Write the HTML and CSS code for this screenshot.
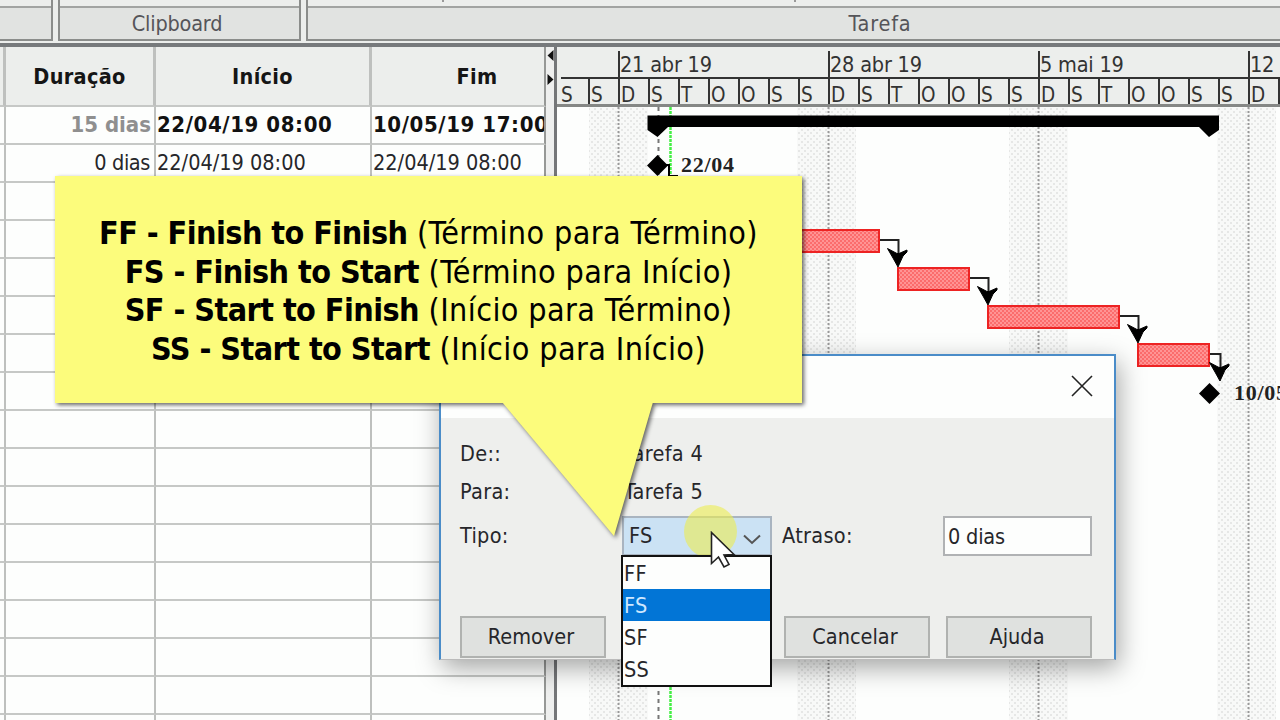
FILE: index.html
```html
<!DOCTYPE html>
<html lang="pt-BR">

<head>
    <meta charset="UTF-8">
    <meta name="viewport" content="width=device-width, initial-scale=1.0">
    <title>Gantt</title>
    <link rel="stylesheet" href="styles.css">
</head>

<body>
    <div class="ribbon">
        <div class="group group-first"><div class="group-title"></div></div>
        <div class="group group-clipboard"><div class="group-title">Clipboard</div></div>
        <div class="group group-task"><div class="group-title">Tarefa</div></div>
    </div>

    <main class="workspace">
        <table class="tasks">
            <colgroup>
                <col class="col-edge"><col class="col-duration"><col class="col-start"><col class="col-end">
            </colgroup>
            <thead>
                <tr>
                    <th></th>
                    <th>Duração</th>
                    <th>Início</th>
                    <th class="th-end">Fim</th>
                </tr>
            </thead>
            <tbody id="taskRows">
                <tr class="summary">
                    <td></td>
                    <td class="duration">15 dias</td>
                    <td>22/04/19 08:00</td>
                    <td>10/05/19 17:00</td>
                </tr>
                <tr>
                    <td></td>
                    <td class="duration">0 dias</td>
                    <td>22/04/19 08:00</td>
                    <td>22/04/19 08:00</td>
                </tr>
            </tbody>
        </table>

        <div class="splitter">
            <svg width="8" height="40" viewBox="0 0 8 40">
                <path d="M7.500 3v11L1.500 8.500z M1.500 27v11L7.500 32.500z" fill="#111"/>
            </svg>
        </div>

        <section class="gantt">
            <div class="timescale">
                <div class="weeks">
                    <span></span><span>21 abr 19</span><span>28 abr 19</span><span>5 mai 19</span><span>12 mai 19</span>
                </div>
                <div class="days" id="days"></div>
            </div>
            <svg class="chart" width="723" height="613" viewBox="557 107 723 613">
                <defs>
                    <pattern id="weekend" width="6" height="6" patternUnits="userSpaceOnUse">
                        <rect width="6" height="6" fill="#f8f9f8"/>
                        <path d="M0 0h2v2H0zM3 3h2v2H3z" fill="#e6e7e6"/>
                    </pattern>
                    <pattern id="critical" width="4" height="4" patternUnits="userSpaceOnUse">
                        <rect width="4" height="4" fill="#ff9494"/>
                        <path d="M0 0h2v2H0zM2 2h2v2H2z" fill="#fb6c6c"/>
                    </pattern>
                </defs>
                <g fill="url(#weekend)">
                    <rect x="589" y="107" width="59" height="613"/>
                    <rect x="797" y="107" width="59" height="613"/>
                    <rect x="1009" y="107" width="59" height="613"/>
                    <rect x="1217" y="107" width="59" height="613"/>
                </g>
                <path d="M618.500 107v613M828.500 107v613M1038.500 107v613M1248.500 107v613" stroke="#999" stroke-width="2" stroke-dasharray="2 2"/>
                <path d="M658.500 107v613" stroke="#777" stroke-width="2" stroke-dasharray="4 4"/>
                <path d="M670.500 107v613" stroke="#45ef45" stroke-width="2.500" stroke-dasharray="3 1"/>

                <path d="M647.500 115.500H1219V130L1209 137L1199 127H668L657.500 137L647.500 130z"/>
                <path d="M657.500 155l10.500 10.500-10.500 10.500-10.500-10.500z"/>
                <path d="M666 165h3v12M669 176h9" fill="none" stroke="#000" stroke-width="2"/>

                <g fill="url(#critical)" stroke="#ed2323" stroke-width="2">
                    <rect x="748" y="230" width="131" height="22"/>
                    <rect x="898" y="268" width="71" height="22"/>
                    <rect x="988" y="306" width="131" height="22"/>
                    <rect x="1138" y="344" width="71" height="22"/>
                </g>
                <g fill="none" stroke="#222" stroke-width="2">
                    <path d="M880 240h18.500v14M970 278h18.500v14M1120 316h18.500v14M1210 354h10.500v18"/>
                </g>
                <g>
                    <path id="arrow" d="M887.500 248.500l9.500 5h2l8-3.500v2l-4 4-5 11-5-9z" stroke="#000"/>
                    <use href="#arrow" x="90" y="38"/>
                    <use href="#arrow" x="240" y="76"/>
                    <use href="#arrow" x="322" y="114"/>
                </g>
                <path d="M1209.500 383l10.500 10.500-10.500 10.500-10.500-10.500z"/>
                <text x="681" y="172">22/04</text>
                <text x="1234" y="400">10/05</text>
            </svg>
        </section>
    </main>

    <div class="dialog">
        <div class="dialog-bar">
            <svg width="22" height="22" viewBox="0 0 22 22">
                <path d="M1 1l20 20M21 1L1 21" stroke="#222" stroke-width="1.600"/>
            </svg>
        </div>
        <div class="dialog-body">
            <div class="fields">
                <label>De::</label>
                <span class="value">Tarefa 4</span>
                <label>Para:</label>
                <span class="value">Tarefa 5</span>
                <label>Tipo:</label>
                <div class="combo">
                    <span>FS</span>
                    <svg width="18" height="11" viewBox="0 0 18 11">
                        <path d="M1 1.500l8 7.500 8-7.500" fill="none" stroke="#555" stroke-width="2"/>
                    </svg>
                    <ul class="options">
                        <li>FF</li>
                        <li class="selected">FS</li>
                        <li>SF</li>
                        <li>SS</li>
                    </ul>
                </div>
                <label>Atraso:</label>
                <div class="lag-input">0 dias</div>
            </div>
            <div class="buttons">
                <button>Remover</button>
                <button class="btn-cancel">Cancelar</button>
                <button>Ajuda</button>
            </div>
        </div>
    </div>

    <div class="click-spot"></div>
    <svg class="cursor" width="26" height="38" viewBox="0 0 26 38">
        <path d="M1.500 1.500v31l7-6.500 5.500 10 5-2.500-5-9.500 10-.5z" fill="#fff" stroke="#222" stroke-width="1.600"/>
    </svg>

    <div class="callout">
        <svg class="callout-tail" width="152" height="135" viewBox="0 0 152 135">
            <path d="M0 0h151L112 134z" fill="#fcfc7c"/>
        </svg>
        <p><b>FF - Finish to Finish</b> (Término para Término)</p>
        <p><b>FS - Finish to Start</b> (Término para Início)</p>
        <p><b>SF - Start to Finish</b> (Início para Término)</p>
        <p><b>SS - Start to Start</b> (Início para Início)</p>
    </div>

    <script>
        const taskRows = document.getElementById('taskRows');
        const days = document.getElementById('days');

        // blank rows down to the bottom of the window
        for (let i = 0; i < 15; i++) {
            taskRows.insertAdjacentHTML('beforeend', '<tr><td></td><td></td><td></td><td></td></tr>');
        }

        days.innerHTML = 'SSDSTOOSSDSTOOSSDSTOOSSDS'.split('')
            .map(day => `<span>${day}</span>`)
            .join('');
    </script>
</body>

</html>
```
FILE: styles.css
```css
* {
    box-sizing: border-box;
}

body {
    margin: 0;
    width: 1280px;
    height: 720px;
    overflow: hidden;
    position: relative;
    background: #fdfefd;
    color: #26262a;
    font-family: "DejaVu Sans Condensed", "DejaVu Sans", sans-serif;
    font-stretch: condensed;
    font-size: 21.5px;
}

.ribbon {
    height: 47px;
    display: flex;
    gap: 5px;
    background: #eceeec;
    border-bottom: 4px solid #777a7c;
    padding-bottom: 2px;
}

.group {
    border: 2px solid #8b8d8b;
    border-top: none;
    display: flex;
    flex-direction: column;
    justify-content: flex-end;
}

.group-first {
    width: 53px;
    border-left: none;
}

.group-clipboard {
    width: 243px;
}

.group-task {
    flex: 1;
    border-right: none;
    background:
        linear-gradient(#999, #999) 134px 0 / 2px 2px no-repeat,
        linear-gradient(#999, #999) 486px 0 / 2px 2px no-repeat;
}

.group-title {
    height: 33px;
    border-top: 2px solid #a2a4a2;
    background: #e1e3e1;
    color: #555559;
    line-height: 31px;
    text-align: center;
}

.group-clipboard .group-title {
    padding-right: 5px;
    letter-spacing: -0.2px;
}

.group-task .group-title {
    padding-left: 172px;
    letter-spacing: 0.8px;
}

.workspace {
    display: flex;
    height: 673px;
}

.tasks {
    width: 546px;
    flex: none;
    align-self: flex-start;
    table-layout: fixed;
    border-spacing: 0;
}

.col-edge {
    width: 6px;
}

.col-duration {
    width: 150px;
}

.col-start {
    width: 216px;
}

.col-end {
    width: 174px;
}

.tasks th,
.tasks td {
    padding: 0;
    border-right: 2px solid #bec0be;
    border-bottom: 2px solid #c6c8c6;
    white-space: nowrap;
    overflow: hidden;
}

.tasks th {
    height: 60px;
    background: #eceeec;
    color: #151515;
    font-size: 21.5px;
    letter-spacing: 0.3px;
    border-right-width: 3px;
}

.tasks .th-end {
    padding-left: 38px;
    border-right-width: 2px;
}

.tasks td {
    height: 38px;
    padding-left: 1px;
    line-height: 34px;
}

.tasks td:last-child,
.tasks th:last-child {
    border-right-color: #969896;
}

.tasks .duration {
    padding-right: 4px;
    letter-spacing: -0.4px;
    text-align: right;
}

.summary td {
    color: #111;
    font-weight: bold;
    font-size: 22px;
    letter-spacing: 0.6px;
}

.tasks .summary .duration {
    color: #8f8f8f;
    padding-right: 3px;
    letter-spacing: 0;
}

.splitter {
    width: 8px;
    flex: none;
    background: #eeefee;
}

.splitter svg {
    display: block;
}

.gantt {
    flex: 1;
    min-width: 0;
    overflow: hidden;
    border-left: 3px solid #747678;
}

.timescale {
    height: 60px;
    padding-top: 4px;
    background: #eceeec;
    border-bottom: 3px solid #858785;
    color: #333;
    overflow: hidden;
}

.weeks {
    display: flex;
    height: 28px;
    margin-left: 4px;
    border-bottom: 2px solid #333;
    letter-spacing: -0.2px;
}

.weeks span {
    width: 210px;
    flex: none;
    border-left: 2px solid #333;
    line-height: 28px;
    white-space: nowrap;
}

.weeks span:first-child {
    width: 57px;
    border-left: none;
}

.days {
    display: flex;
    height: 25px;
    margin-left: 1px;
    font-size: 20.5px;
    line-height: 32px;
}

.days span {
    width: 30px;
    height: 25px;
    flex: none;
    padding-left: 1px;
    border-left: 2px solid #333;
}

.days span:first-child {
    border-left-color: transparent;
}

.chart {
    display: block;
}

.chart text {
    font: bold 22px "Liberation Serif", serif;
    letter-spacing: 0.7px;
    fill: #222;
}

.dialog {
    position: absolute;
    left: 439px;
    top: 354px;
    width: 677px;
    height: 306px;
    border: 2px solid #4a8cc8;
    border-bottom: 1px solid #bbb;
    background: #eeefed;
    box-shadow: 3px 8px 24px rgba(0, 0, 0, 0.35);
}

.dialog-bar {
    height: 62px;
    padding: 19px 21px 0 0;
    background: #fdfefd;
    display: flex;
    justify-content: flex-end;
}

.dialog-body {
    padding: 16px 22px 0 19px;
}

.fields {
    display: grid;
    grid-template-columns: 162px 160px 161px 149px;
    grid-template-rows: 38px 38px 51px;
    align-items: center;
    letter-spacing: 0.3px;
}

.value {
    grid-column: 2 / -1;
    padding-left: 2px;
}

.combo {
    position: relative;
    width: 150px;
    height: 40px;
    padding: 0 9px 0 5px;
    border: 2px solid #a9b4c0;
    background: #cbe2f4;
    display: flex;
    align-items: center;
    justify-content: space-between;
}

.combo svg {
    margin-top: 7px;
}

.options {
    position: absolute;
    left: -3px;
    top: 37px;
    width: 151px;
    margin: 0;
    padding: 0;
    border: 2px solid #111;
    background: #fdfefd;
    list-style: none;
}

.options li {
    height: 32px;
    line-height: 33px;
    padding-left: 1px;
}

.options .selected {
    background: #0275d6;
    color: #cfe8ff;
}

.lag-input {
    height: 40px;
    padding-left: 3px;
    border: 2px solid #b0b2b4;
    background: #fdfefd;
    line-height: 37px;
    letter-spacing: -0.2px;
}

.buttons {
    display: grid;
    grid-template-columns: repeat(4, 146px);
    gap: 16px;
    margin-top: 55px;
}

.buttons button {
    height: 42px;
    padding: 0 4px 2px 0;
    border: 2px solid #b0b2b0;
    background: #dfe1df;
    color: #26262a;
    font: inherit;
}

.btn-cancel {
    grid-column: 3;
}

.click-spot {
    position: absolute;
    left: 684px;
    top: 505px;
    width: 53px;
    height: 53px;
    border-radius: 50%;
    background: rgba(236, 236, 80, 0.6);
    clip-path: inset(0 0 3px 0);
}

.cursor {
    position: absolute;
    left: 710px;
    top: 531px;
}

.callout {
    position: absolute;
    left: 55px;
    top: 176px;
    width: 747px;
    height: 227px;
    padding-top: 38px;
    background: #fcfc7c;
    color: #000;
    font-size: 32px;
    text-align: center;
    filter: drop-shadow(2px 2px 2px rgba(0, 0, 0, 0.6));
}

.callout-tail {
    position: absolute;
    left: 447px;
    top: 226px;
}

.callout p {
    margin: 0;
    height: 38.6px;
    line-height: 38.6px;
    white-space: nowrap;
    letter-spacing: 0.4px;
}

.callout b {
    letter-spacing: -0.55px;
}
```
